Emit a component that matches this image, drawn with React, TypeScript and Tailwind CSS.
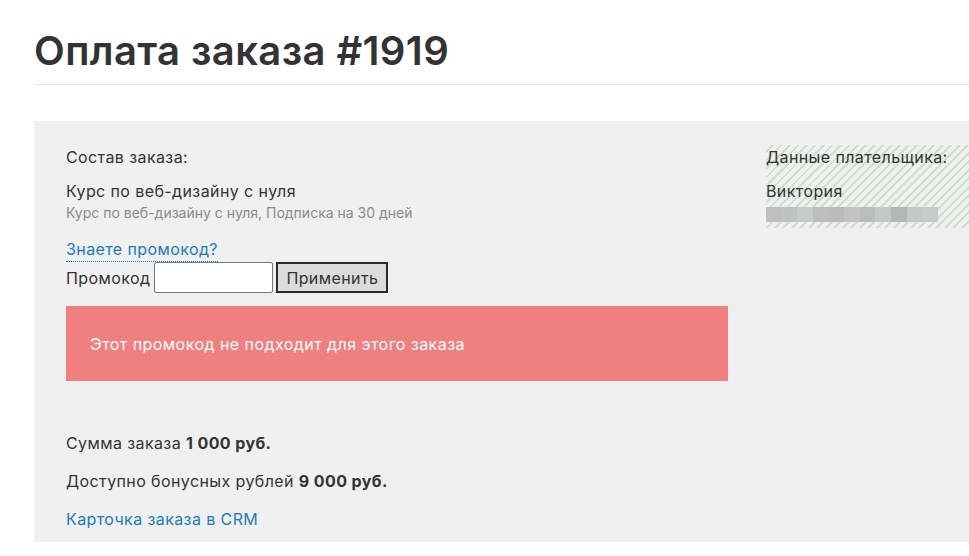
export default function App() {
  const blur = ["#bdc0bd", "#bfc2bf", "#c6cbc6", "#bbbebb", "#b8bcbb", "#c0c3c0", "#babdb9", "#c4c7c4", "#b4b6b4", "#c5c9c5", "#c7cbc7"]

  return (
    <div className="min-h-screen bg-white pl-[34px] text-[#333] font-['Inter','Noto_Sans',sans-serif]">
      <div className="pt-[27px] pb-[9px] border-b border-[#e6e6e6]">
        <h1 className="text-[40px] leading-[48px] font-semibold tracking-[0.4px] text-[#333]">Оплата заказа #1919</h1>
      </div>

      <div className="mt-[36px] bg-[#f0f0f0] pl-[32px] pt-[24px] pb-[11px] flex gap-[38px] text-[16px] leading-[24px] tracking-[0.4px]">
        <div className="w-[662px] shrink-0">
          <p>Состав заказа:</p>
          <p className="mt-[10px]">Курс по веб-дизайну с нуля</p>
          <p className="text-[14px] leading-[20px] tracking-normal text-[#8a8a8a]">Курс по веб-дизайну с нуля, Подписка на 30 дней</p>

          <a href="#" className="mt-[14px] inline-block text-[#1a7bbf] border-b border-dotted border-[#1a7bbf]">Знаете промокод?</a>
          <div className="flex items-center">
            <span>Промокод</span>
            <input type="text" className="ml-[4px] w-[119px] h-[31px] bg-white border border-[#767676] rounded-[2px] outline-none px-1" />
            <button className="ml-[3px] w-[112px] h-[31px] bg-[#dcdcdc] border-2 border-[#2b2b2b] text-[#333]">Применить</button>
          </div>

          <div className="mt-[13px] h-[75px] bg-[#f08080] px-[24px] flex items-center text-white tracking-[0.45px]">
            Этот промокод не подходит для этого заказа
          </div>

          <p className="mt-[50px]">Сумма заказа <b className="font-bold">1 000 руб.</b></p>
          <p className="mt-[14px]">Доступно бонусных рублей <b className="font-bold">9 000 руб.</b></p>
          <a href="#" className="mt-[14px] block text-[#1a7bbf]">Карточка заказа в CRM</a>
        </div>

        <div className="flex-1 min-w-0">
          <div className="pb-[6px] bg-[image:repeating-linear-gradient(135deg,#f0f0f0_0px,#f0f0f0_4px,#c9e2c9_4px,#c9e2c9_6px)] whitespace-nowrap">
            <p>Данные плательщика:</p>
            <p className="mt-[10px]">Виктория</p>
            <div className="mt-[4px] flex h-[15px] w-[172px]">
              {blur.map((c, i) => (
                <div key={i} className="flex-1" style={{ backgroundColor: c }} />
              ))}
            </div>
          </div>
        </div>
      </div>
    </div>
  )
}
